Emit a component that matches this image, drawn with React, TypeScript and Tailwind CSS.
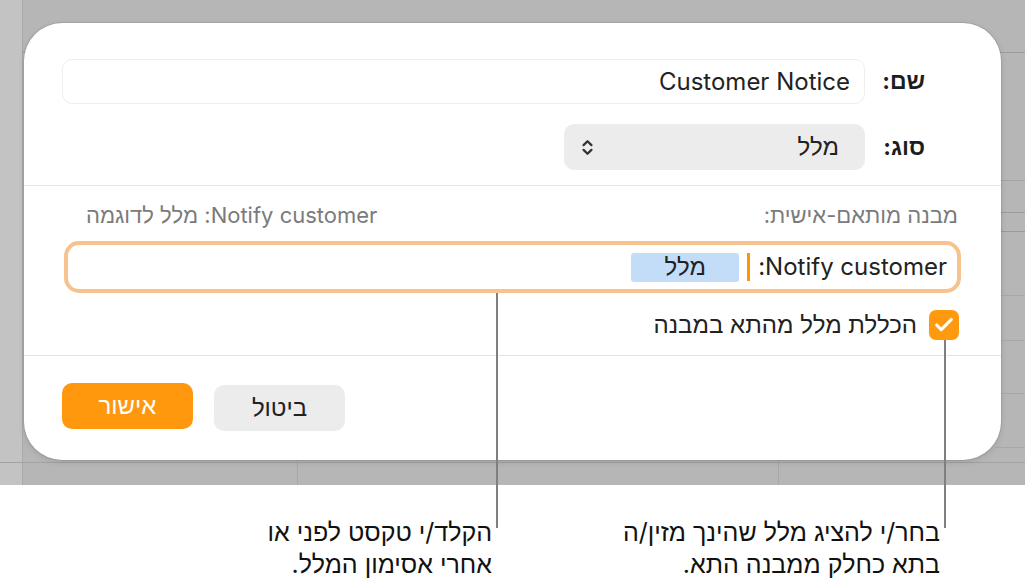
import { ChevronsUpDown, Check } from "lucide-react";

const font = { fontFamily: '"Inter", "Liberation Sans", "Open Sans", sans-serif' };

function Backdrop() {
  // spreadsheet grid peeking out behind the sheet
  return (
    <div className="absolute inset-0 pointer-events-none">
      <div className="absolute left-0 top-0 h-full w-[22px] bg-[#c3c3c3]" />
      <div className="absolute left-[22px] top-0 h-full w-px bg-[#a9a9a9]" />
      <div className="absolute left-[22px] right-0 top-[52px] h-px bg-[#9c9c9c]" />
      <div className="absolute left-[297px] top-[53px] bottom-0 w-px bg-[#a8a8a8]" />
      <div className="absolute left-[778px] top-[53px] bottom-0 w-px bg-[#a8a8a8]" />
      <div className="absolute right-0 top-[180px] w-[30px] h-px bg-[#a4a4a4]" />
      <div className="absolute right-0 top-[212px] w-[30px] h-px bg-[#9a9a9a]" />
      <div className="absolute right-0 top-[231px] w-[30px] h-px bg-[#9a9a9a]" />
      <div className="absolute right-0 top-[295px] w-[30px] h-px bg-[#a8a8a8]" />
      <div className="absolute right-0 top-[340px] w-[30px] h-px bg-[#a8a8a8]" />
      <div className="absolute right-0 top-[393px] w-[30px] h-px bg-[#a8a8a8]" />
      <div className="absolute right-0 top-[447px] w-[30px] h-px bg-[#a8a8a8]" />
      <div className="absolute left-0 right-0 top-[462px] h-px bg-[#a2a2a2]" />
    </div>
  );
}

function Sheet() {
  return (
    <div
      dir="rtl"
      className="relative mx-auto w-[977px] h-[437px] bg-white rounded-[38px] shadow-[0_0_0_1px_rgba(0,0,0,0.08),0_2px_6px_rgba(0,0,0,0.12)] flex flex-col"
    >
      <div className="pt-[36px] pr-[76px] pl-[38px] flex flex-col gap-[20px]">
        <div className="flex items-center gap-[20px]">
          <span className="w-[40px] text-[23px] font-bold text-[#1d1d1d]">שם:</span>
          <div className="flex-1 h-[45px] rounded-[10px] border border-[#eeeeee] flex items-center px-[14px] text-[24px] text-[#222]">
            <span dir="ltr">Customer Notice</span>
          </div>
        </div>
        <div className="flex items-center gap-[20px]">
          <span className="w-[40px] text-[23px] font-bold text-[#1d1d1d]">סוג:</span>
          <div className="w-[301px] h-[46px] rounded-[10px] bg-[#ececec] flex items-center justify-between pr-[26px] pl-[14px] text-[24px] text-[#222]">
            <span>מלל</span>
            <ChevronsUpDown size={19} strokeWidth={2.8} className="text-[#333]" />
          </div>
        </div>
      </div>

      <div className="mt-[15px] h-px bg-[#e4e4e4]" />

      <div className="px-[40px] pt-[15px] flex flex-col">
        <div className="flex items-center justify-between h-[28px] text-[22px] text-[#7b7b7b] pr-[3px] pl-[22px]">
          <span>מבנה מותאם-אישית:</span>
          <span>Notify customer: מלל לדוגמה</span>
        </div>
        <div className="mt-[12px] h-[52px] rounded-[15px] border-[4px] border-[#f8c28f] flex items-center pr-[10px] text-[24px] text-[#222]">
          <span>Notify customer:</span>
          <span className="mx-[8px] w-[3px] h-[28px] bg-[#ff9500]" />
          <span className="h-[29px] w-[108px] rounded-[3px] bg-[#c3ddf8] flex items-center justify-center">
            מלל
          </span>
        </div>
        <div className="mt-[17px] h-[30px] flex items-center gap-[12px] pr-[2px]">
          <span className="w-[30px] h-[30px] rounded-[7px] bg-[#ff9a0e] flex items-center justify-center">
            <Check size={22} strokeWidth={3.4} className="text-white" />
          </span>
          <span className="text-[24px] leading-[30px] text-[#222]">הכללת מלל מהתא במבנה</span>
        </div>
      </div>

      <div className="mt-[15px] h-px bg-[#e4e4e4]" />

      <div className="flex justify-end gap-[21px] pl-[38px] pt-[27px]">
        <button className="w-[131px] h-[46px] rounded-[10px] bg-[#ececec] text-[24px] text-[#222] mt-[2px]">
          ביטול
        </button>
        <button className="w-[131px] h-[46px] rounded-[10px] bg-[#ff980d] text-[24px] text-white">
          אישור
        </button>
      </div>
    </div>
  );
}

export default function App() {
  return (
    <div className="relative w-[1025px] h-[587px] bg-white overflow-hidden" style={font}>
      <div className="relative h-[485px] bg-[#b6b6b6] pt-[23px] pl-[24px] pr-[24px]">
        <Backdrop />
        <Sheet />
      </div>

      <div dir="rtl" className="flex pr-[85px] pt-[31px] text-[25px] leading-[32px] text-[#111]">
        <div className="w-[340px]">
          בחר/י להציג מלל שהינך מזין/ה
          <br />
          בתא כחלק ממבנה התא.
        </div>
        <div className="mr-[108px] w-[250px]">
          הקלד/י טקסט לפני או
          <br />
          אחרי אסימון המלל.
        </div>
      </div>

      <div className="absolute left-[944px] top-[340px] w-[2px] h-[188px] bg-[#7f7f7f]" />
      <div className="absolute left-[496px] top-[293px] w-[2px] h-[235px] bg-[#7f7f7f]" />
    </div>
  );
}
